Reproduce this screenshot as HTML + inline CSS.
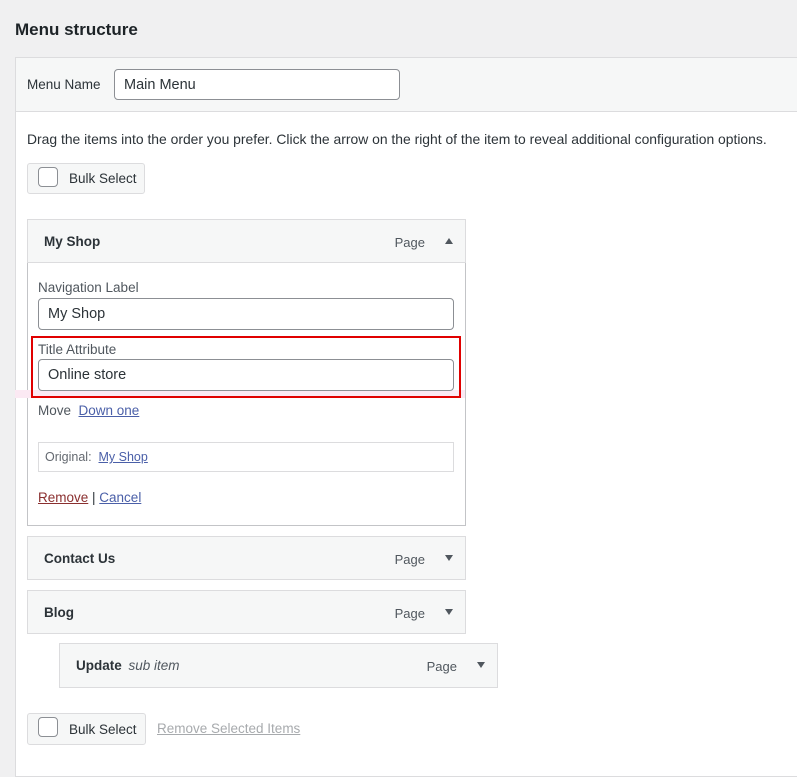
<!DOCTYPE html>
<html><head><style>
body{margin:0;width:797px;height:768px;overflow:hidden;background:#f0f0f1;font-family:"Liberation Sans",sans-serif;color:#2c3338;position:relative;font-size:13.5px}
.a{position:absolute}
.inp{position:absolute;background:#fff;border:1px solid #8c8f94;border-radius:4px;box-sizing:border-box;font-size:14.5px;padding-left:9px;display:flex;align-items:center;color:#2c3338}
.item{position:absolute;background:#f6f7f7;border:1px solid #dcdcde;box-sizing:border-box}
.item b{position:absolute;left:16px;top:14px;font-size:13.5px}
.pg{position:absolute;right:40px;top:15px;color:#50575e;font-size:13px}
.tri{position:absolute;right:12px;top:18px;width:0;height:0;border-left:4.5px solid transparent;border-right:4.5px solid transparent;border-top:6px solid #50575e}
.btn{position:absolute;background:#f6f7f7;border:1px solid #dcdcde;border-radius:3px;box-sizing:border-box}
.cb{position:absolute;left:10px;top:3px;width:20px;height:20px;border:1px solid #8c8f94;border-radius:4px;background:#fff;box-sizing:border-box}
a{color:#4a5fa8}
</style></head><body>
<div class="a" style="left:15px;top:20px;font-size:17px;font-weight:600;color:#1d2327">Menu structure</div>
<div class="a" style="left:15px;top:57px;width:800px;height:720px;background:#fff;border:1px solid #dcdcde;box-sizing:border-box"></div>
<div class="a" style="left:16px;top:58px;width:790px;height:53px;background:#f6f7f7;border-bottom:1px solid #dcdcde"></div>
<div class="a" style="left:27px;top:77px">Menu Name</div>
<div class="inp" style="left:114px;top:69px;width:286px;height:31px">Main Menu</div>
<div class="a" style="left:27px;top:131px;font-size:13.9px;white-space:nowrap">Drag the items into the order you prefer. Click the arrow on the right of the item to reveal additional configuration options.</div>
<div class="btn" style="left:27px;top:163px;width:118px;height:31px"><div class="cb"></div><span class="a" style="left:41px;top:7px">Bulk Select</span></div>

<div class="a" style="left:27px;top:219px;width:439px;height:307px;border:1px solid #c3c4c7;box-sizing:border-box;background:#fff"></div>
<div class="item" style="left:27px;top:219px;width:439px;height:44px"><b>My Shop</b><span class="pg">Page</span><div class="tri" style="border-top:none;border-bottom:6px solid #50575e;top:18px"></div></div>
<div class="a" style="left:38px;top:280px;color:#50575e">Navigation Label</div>
<div class="inp" style="left:38px;top:298px;width:416px;height:32px">My Shop</div>
<div class="a" style="left:15px;top:390px;width:450px;height:8px;background:#fbe9f3"></div>
<div class="a" style="left:31px;top:336px;width:430px;height:62px;border:2px solid #e00000;box-sizing:border-box"></div>
<div class="a" style="left:38px;top:342px;color:#50575e">Title Attribute</div>
<div class="inp" style="left:38px;top:359px;width:416px;height:32px">Online store</div>
<div class="a" style="left:38px;top:403px;color:#50575e">Move&nbsp; <a href="#">Down one</a></div>
<div class="a" style="left:38px;top:442px;width:416px;height:30px;border:1px solid #dcdcde;box-sizing:border-box;font-size:12.5px;color:#646970;padding:7px 0 0 6px">Original:&nbsp; <a href="#">My Shop</a></div>
<div class="a" style="left:38px;top:490px"><a href="#" style="color:#8a2f2f">Remove</a> | <a href="#">Cancel</a></div>

<div class="item" style="left:27px;top:536px;width:439px;height:44px"><b>Contact Us</b><span class="pg">Page</span><div class="tri"></div></div>
<div class="item" style="left:27px;top:590px;width:439px;height:44px"><b>Blog</b><span class="pg">Page</span><div class="tri"></div></div>
<div class="item" style="left:59px;top:643px;width:439px;height:45px"><b>Update <i style="font-weight:normal;color:#50575e;margin-left:3px">sub item</i></b><span class="pg">Page</span><div class="tri"></div></div>

<div class="btn" style="left:27px;top:713px;width:119px;height:32px"><div class="cb"></div><span class="a" style="left:41px;top:8px">Bulk Select</span></div>
<div class="a" style="left:157px;top:721px;color:#a7aaad;text-decoration:underline">Remove Selected Items</div>
</body></html>
